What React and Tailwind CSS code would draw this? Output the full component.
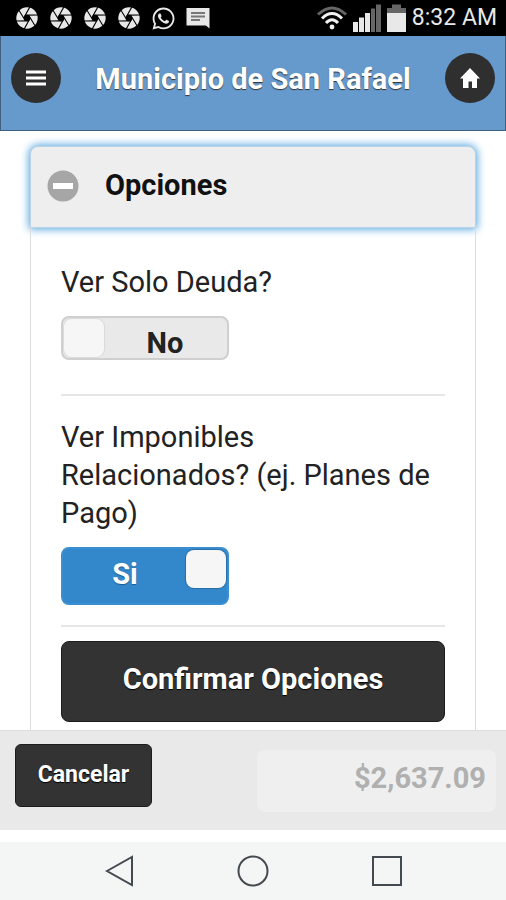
import { useId, useState } from 'react'
import { FaWhatsapp } from 'react-icons/fa'
import clsx from 'clsx'

function ShutterIcon() {
  return (
    <svg viewBox="-11 -11 22 22" className="size-6" aria-hidden="true">
      <circle r="9.8" fill="#e8e8e8" />
      <circle r="3" fill="#000" />
      {[0, 60, 120, 180, 240, 300].map((angle) => (
        <path
          key={angle}
          d="M1.5 -2.6 L7.5 7.4"
          stroke="#000"
          strokeWidth="1"
          transform={`rotate(${angle})`}
        />
      ))}
    </svg>
  )
}

function MessageIcon() {
  return (
    <svg viewBox="0 0 24 22" className="h-[22px] w-6" aria-hidden="true">
      <path d="M0.5 1H23.5V21.5L20 18.5H0.5Z" fill="#e8e8e8" />
      <path d="M5 6H19M5 9.5H19M5 13H14" stroke="#777" strokeWidth="2" />
    </svg>
  )
}

function WifiIcon() {
  return (
    <svg viewBox="0 0 30 24" className="h-6 w-[30px]" fill="none" strokeWidth="3" aria-hidden="true">
      <path d="M1 8.5Q15 -4.5 29 8.5" stroke="#666" />
      <path d="M5 12.5Q15 2.5 25 12.5" stroke="#f0f0f0" />
      <path d="M9 17Q15 10.5 21 17" stroke="#f0f0f0" />
      <circle cx="15" cy="21" r="2.4" fill="#f0f0f0" />
    </svg>
  )
}

function SignalIcon() {
  return (
    <svg viewBox="0 0 28 28" className="size-7" aria-hidden="true">
      <path d="M0 18H5V28H0ZM6 13.5H11V28H6ZM12 9H17V28H12Z" fill="#e8e8e8" />
      <path d="M18 4.5H22V28H18ZM23 0.5H28V28H23Z" fill="#666" />
    </svg>
  )
}

function BatteryIcon() {
  return (
    <svg viewBox="0 0 19 28" className="h-7 w-[19px]" aria-hidden="true">
      <path d="M5 0.5H14V4H19V10H0V4H5Z" fill="#666" />
      <path d="M0 9H19V28H0Z" fill="#e8e8e8" />
    </svg>
  )
}

function StatusBar() {
  return (
    <div className="flex h-9 items-center justify-between bg-black pl-[15px] pr-[9px] text-[#e8e8e8]">
      <div className="flex items-center gap-[10px]">
        <ShutterIcon />
        <ShutterIcon />
        <ShutterIcon />
        <ShutterIcon />
        <FaWhatsapp className="size-[25px]" />
        <MessageIcon />
      </div>
      <div className="flex items-center gap-[6px]">
        <WifiIcon />
        <SignalIcon />
        <BatteryIcon />
        <span className="text-[23px] leading-9">8:32 AM</span>
      </div>
    </div>
  )
}

function Header() {
  return (
    <header className="flex items-start justify-between border-x border-b border-[#3f5f7f] bg-[#6699cc] px-[10px] pt-[17px] pb-[25px]">
      <button
        type="button"
        aria-label="Menu"
        className="flex size-[50px] items-center justify-center rounded-full bg-[#2f2f2f]"
      >
        <svg viewBox="0 0 20 16" className="h-4 w-5" aria-hidden="true">
          <path d="M0 2H20M0 8H20M0 14H20" stroke="#fff" strokeWidth="3" />
        </svg>
      </button>
      <h1 className="text-[29px] leading-[52px] font-bold text-white [text-shadow:0_1px_1px_#333]">
        Municipio de San Rafael
      </h1>
      <button
        type="button"
        aria-label="Inicio"
        className="flex size-[50px] items-center justify-center rounded-full bg-[#2f2f2f]"
      >
        <svg viewBox="0 0 20 20" className="size-5" aria-hidden="true">
          <path d="M10 0L20 10.5H17V20H12V13.5H8.5V20H3V10.5H0Z" fill="#fff" />
        </svg>
      </button>
    </header>
  )
}

function FlipSwitch({ label, initial = false }) {
  const id = useId()
  const [on, setOn] = useState(initial)

  return (
    <div className="flex flex-col items-start gap-[15px]">
      <label htmlFor={id} className="text-[29px] leading-[38px] text-[#222]">
        {label}
      </label>
      <div className="grid w-[168px]">
        <input
          id={id}
          type="checkbox"
          role="switch"
          checked={on}
          onChange={(e) => setOn(e.target.checked)}
          className={clsx(
            'col-start-1 row-start-1 appearance-none rounded-lg border-2',
            on ? 'h-[58px] border-[#3a8fd2] bg-[#3388cc]' : 'h-11 border-[#cfcfcf] bg-[#e9e9e9]',
          )}
        />
        <div
          className={clsx(
            'pointer-events-none col-start-1 row-start-1 flex items-start justify-between p-[3px]',
            on && 'flex-row-reverse',
          )}
        >
          <span
            className={clsx(
              'h-[38px] w-10 rounded-lg bg-[#f6f6f6]',
              on ? 'shadow-[0_0_1px_1px_#2b6da3]' : 'shadow-[0_0_1px_1px_#dadada]',
            )}
          />
          <span
            className={clsx(
              'h-[38px] flex-1 text-center text-[29px] leading-[48px] font-bold',
              on ? 'text-white [text-shadow:0_1px_1px_#1d5a8c]' : 'text-[#222]',
            )}
          >
            {on ? 'Si' : 'No'}
          </span>
        </div>
      </div>
    </div>
  )
}

function OptionsPanel() {
  const [open, setOpen] = useState(true)

  return (
    <section>
      <h2>
        <button
          type="button"
          aria-expanded={open}
          onClick={() => setOpen(!open)}
          className="flex h-[82px] w-full items-center gap-[26px] rounded-t-lg border border-[#b9d3e8] bg-[#eeeeee] px-4 pb-[2px] text-[29px] font-bold text-[#111] shadow-[0_0_9px_1px_#4ba1dc]"
        >
          <svg viewBox="0 0 32 32" className="size-8" aria-hidden="true">
            <circle cx="16" cy="16" r="15.5" fill="#a6a6a6" />
            <path d="M6 16H26" stroke="#fff" strokeWidth="6" />
          </svg>
          Opciones
        </button>
      </h2>
      {open && (
        <div className="border-x border-[#dddddd] px-[30px] pt-[35px] pb-2">
          <div className="border-b-2 border-[#e6e6e6] pb-[34px]">
            <FlipSwitch label="Ver Solo Deuda?" />
          </div>
          <div className="border-b-2 border-[#e6e6e6] pt-[22px] pb-[20px]">
            <FlipSwitch label="Ver Imponibles Relacionados? (ej. Planes de Pago)" initial />
          </div>
          <button
            type="button"
            className="mt-[14px] h-[81px] w-full rounded-lg border border-[#1c1c1c] bg-[#333333] pb-1 text-[29px] font-bold text-white [text-shadow:0_1px_1px_#000]"
          >
            Confirmar Opciones
          </button>
        </div>
      )}
    </section>
  )
}

function Footer() {
  return (
    <footer className="flex h-[100px] items-start justify-between border-t border-[#dddddd] bg-[#e9e9e9] pt-[13px] pr-[10px] pl-[15px]">
      <button
        type="button"
        className="h-[63px] w-[137px] rounded-md border border-[#1c1c1c] bg-[#333333] text-[23px] font-bold text-white [text-shadow:0_1px_1px_#000]"
      >
        Cancelar
      </button>
      <input
        type="text"
        aria-label="Total"
        disabled
        defaultValue="$2,637.09"
        className="mt-[6px] h-[62px] w-[239px] rounded-lg bg-[#efefef] px-[10px] pb-[6px] text-right text-[29px] font-bold text-[#b0b0b0]"
      />
    </footer>
  )
}

function NavBar() {
  const shape = 'size-8 fill-none stroke-[#444b50] stroke-2'
  return (
    <nav className="flex h-[58px] items-center justify-between bg-[#f4f5f5] px-[103px]">
      <button type="button" aria-label="Atrás">
        <svg viewBox="0 0 32 32" className={shape}>
          <path d="M4 16L29 2V30Z" />
        </svg>
      </button>
      <button type="button" aria-label="Inicio del teléfono">
        <svg viewBox="0 0 32 32" className={shape}>
          <circle cx="16" cy="16" r="14.5" />
        </svg>
      </button>
      <button type="button" aria-label="Recientes">
        <svg viewBox="0 0 32 32" className={shape}>
          <path d="M2 2H30V30H2Z" />
        </svg>
      </button>
    </nav>
  )
}

export default function App() {
  return (
    <div className="flex min-h-screen flex-col bg-white font-[Roboto,sans-serif]">
      <StatusBar />
      <Header />
      <main className="flex-1 px-[30px] pt-[15px]">
        <OptionsPanel />
      </main>
      <Footer />
      <div className="pt-3">
        <NavBar />
      </div>
    </div>
  )
}
